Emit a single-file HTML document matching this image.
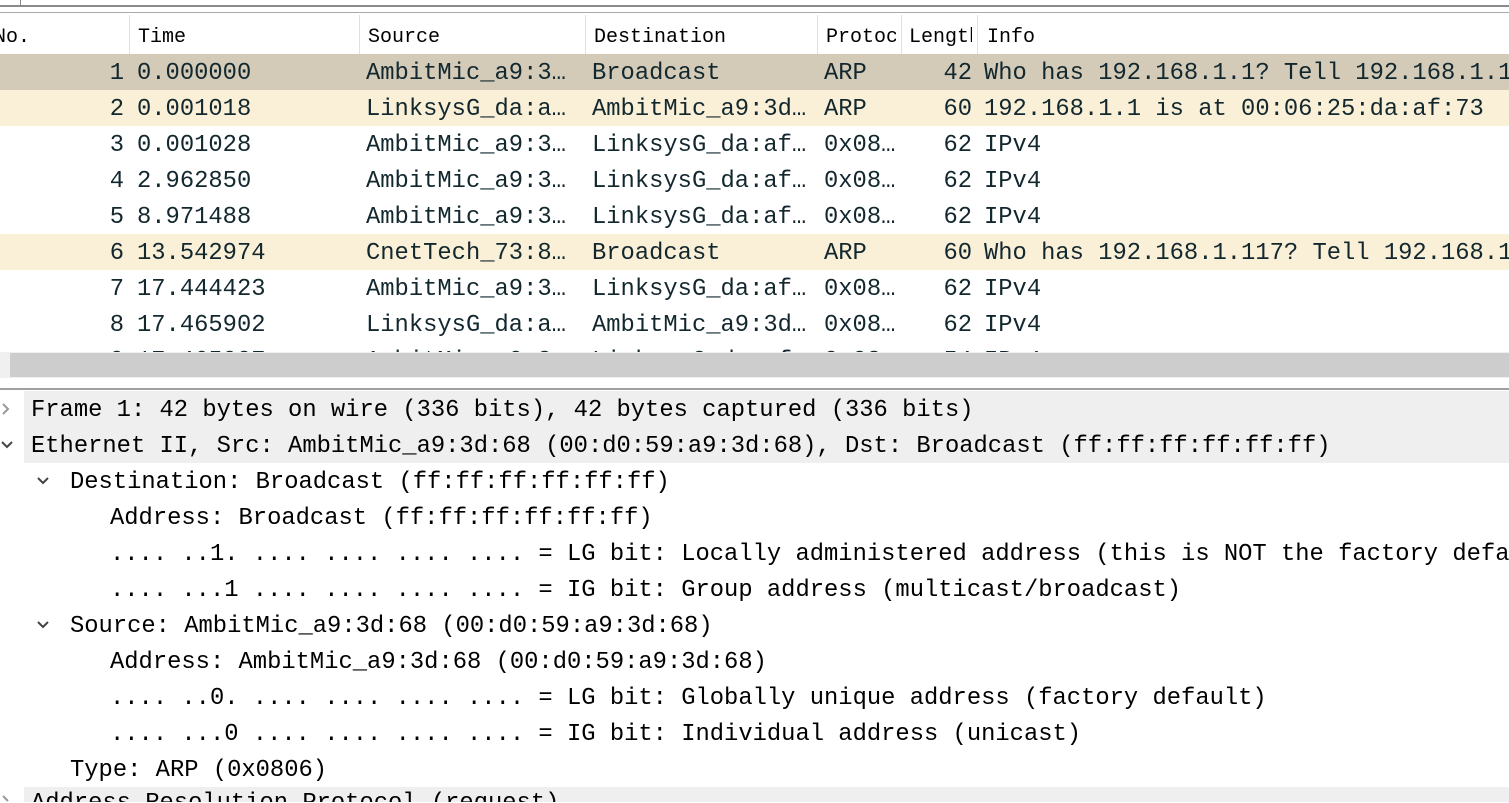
<!DOCTYPE html><html><head><style>
body{margin:0;width:1509px;height:802px;overflow:hidden;background:#fff;position:relative;font-family:"Liberation Mono",monospace;}
.a{position:absolute;white-space:pre;}
.r{position:absolute;left:0;width:1509px;height:36px;font-size:23.8px;line-height:39px;color:#12272e;}
.r span{position:absolute;white-space:pre;overflow:hidden;}
.h{position:absolute;top:26px;font-family:"Liberation Mono",monospace;font-size:20px;color:#000;white-space:pre;overflow:hidden;}
.d{position:absolute;left:0;width:1509px;height:36px;font-size:23.8px;line-height:39px;color:#000;white-space:pre;}
.vl{position:absolute;top:15px;height:40px;width:1px;background:#e0e0e0;}
</style></head><body>
<div class="a" style="left:20px;top:0;width:1px;height:6px;background:#888"></div>
<div class="a" style="left:0;top:5px;width:1509px;height:2px;background:#8a8a8a"></div>
<div class="a" style="left:0;top:12px;width:1509px;height:1px;background:#aaa"></div>
<div class="vl" style="left:129px"></div><div class="vl" style="left:359px"></div><div class="vl" style="left:585px"></div><div class="vl" style="left:817px"></div><div class="vl" style="left:901px"></div><div class="vl" style="left:977px"></div>
<div class="h" style="left:-6px">No.</div><div class="h" style="left:138px">Time</div><div class="h" style="left:368px">Source</div><div class="h" style="left:594px">Destination</div><div class="h" style="left:826px;width:70px">Protocol</div><div class="h" style="left:909px;width:63px">Length</div><div class="h" style="left:987px">Info</div>

<div class="r" style="top:54px;background:#d3cbb7"><span style="right:1385px">1</span><span style="left:137px">0.000000</span><span style="left:366px">AmbitMic_a9:3…</span><span style="left:592px">Broadcast</span><span style="left:824px">ARP</span><span style="right:537px">42</span><span style="left:984px">Who has 192.168.1.1? Tell 192.168.1.1</span></div>
<div class="r" style="top:90px;background:#faf0d7"><span style="right:1385px">2</span><span style="left:137px">0.001018</span><span style="left:366px">LinksysG_da:a…</span><span style="left:592px">AmbitMic_a9:3d…</span><span style="left:824px">ARP</span><span style="right:537px">60</span><span style="left:984px">192.168.1.1 is at 00:06:25:da:af:73</span></div>
<div class="r" style="top:126px"><span style="right:1385px">3</span><span style="left:137px">0.001028</span><span style="left:366px">AmbitMic_a9:3…</span><span style="left:592px">LinksysG_da:af…</span><span style="left:824px">0x08…</span><span style="right:537px">62</span><span style="left:984px">IPv4</span></div>
<div class="r" style="top:162px"><span style="right:1385px">4</span><span style="left:137px">2.962850</span><span style="left:366px">AmbitMic_a9:3…</span><span style="left:592px">LinksysG_da:af…</span><span style="left:824px">0x08…</span><span style="right:537px">62</span><span style="left:984px">IPv4</span></div>
<div class="r" style="top:198px"><span style="right:1385px">5</span><span style="left:137px">8.971488</span><span style="left:366px">AmbitMic_a9:3…</span><span style="left:592px">LinksysG_da:af…</span><span style="left:824px">0x08…</span><span style="right:537px">62</span><span style="left:984px">IPv4</span></div>
<div class="r" style="top:234px;background:#faf0d7"><span style="right:1385px">6</span><span style="left:137px">13.542974</span><span style="left:366px">CnetTech_73:8…</span><span style="left:592px">Broadcast</span><span style="left:824px">ARP</span><span style="right:537px">60</span><span style="left:984px">Who has 192.168.1.117? Tell 192.168.1</span></div>
<div class="r" style="top:270px"><span style="right:1385px">7</span><span style="left:137px">17.444423</span><span style="left:366px">AmbitMic_a9:3…</span><span style="left:592px">LinksysG_da:af…</span><span style="left:824px">0x08…</span><span style="right:537px">62</span><span style="left:984px">IPv4</span></div>
<div class="r" style="top:306px"><span style="right:1385px">8</span><span style="left:137px">17.465902</span><span style="left:366px">LinksysG_da:a…</span><span style="left:592px">AmbitMic_a9:3d…</span><span style="left:824px">0x08…</span><span style="right:537px">62</span><span style="left:984px">IPv4</span></div>
<div class="r" style="top:342px;height:10px;overflow:hidden"><span style="right:1385px">9</span><span style="left:137px">17.465907</span><span style="left:366px">AmbitMic_a9:3…</span><span style="left:592px">LinksysG_da:af…</span><span style="left:824px">0x08…</span><span style="right:537px">54</span><span style="left:984px">IPv4</span></div>
<div class="a" style="left:0;top:352px;width:1509px;height:26px;background:#f0f0f0"></div>
<div class="a" style="left:10px;top:353px;width:1499px;height:24px;background:#cdcdcd"></div>
<div class="a" style="left:0;top:388px;width:1509px;height:2px;background:#a0a0a0"></div>

<div class="a" style="left:24px;top:391px;width:1485px;height:72px;background:#efefef"></div>
<div class="a" style="left:24px;top:787px;width:1485px;height:15px;background:#efefef"></div>
<svg class="a" style="left:0;top:391px" width="40" height="412">
<path d="M3 13 L8 18 L3 23" fill="none" stroke="#999" stroke-width="2"/>
<path d="M2 51 L7 56 L12 51" fill="none" stroke="#444" stroke-width="2"/>
<path d="M3 405 L8 410" fill="none" stroke="#999" stroke-width="2"/>
</svg>
<svg class="a" style="left:36px;top:463px" width="20" height="200"><path d="M2 15 L7 20 L12 15" fill="none" stroke="#444" stroke-width="2"/><path d="M2 159 L7 164 L12 159" fill="none" stroke="#444" stroke-width="2"/></svg>
<div class="d" style="top:391px;left:31px">Frame 1: 42 bytes on wire (336 bits), 42 bytes captured (336 bits)</div>
<div class="d" style="top:427px;left:31px">Ethernet II, Src: AmbitMic_a9:3d:68 (00:d0:59:a9:3d:68), Dst: Broadcast (ff:ff:ff:ff:ff:ff)</div>
<div class="d" style="top:463px;left:70px">Destination: Broadcast (ff:ff:ff:ff:ff:ff)</div>
<div class="d" style="top:499px;left:110px">Address: Broadcast (ff:ff:ff:ff:ff:ff)</div>
<div class="d" style="top:535px;left:110px">.... ..1. .... .... .... .... = LG bit: Locally administered address (this is NOT the factory default)</div>
<div class="d" style="top:571px;left:110px">.... ...1 .... .... .... .... = IG bit: Group address (multicast/broadcast)</div>
<div class="d" style="top:607px;left:70px">Source: AmbitMic_a9:3d:68 (00:d0:59:a9:3d:68)</div>
<div class="d" style="top:643px;left:110px">Address: AmbitMic_a9:3d:68 (00:d0:59:a9:3d:68)</div>
<div class="d" style="top:679px;left:110px">.... ..0. .... .... .... .... = LG bit: Globally unique address (factory default)</div>
<div class="d" style="top:715px;left:110px">.... ...0 .... .... .... .... = IG bit: Individual address (unicast)</div>
<div class="d" style="top:751px;left:70px">Type: ARP (0x0806)</div>
<div class="d" style="top:787px;left:31px;height:15px;overflow:hidden;line-height:36px"><span style="position:relative;top:-1px">Address Resolution Protocol (request)</span></div>
</body></html>
